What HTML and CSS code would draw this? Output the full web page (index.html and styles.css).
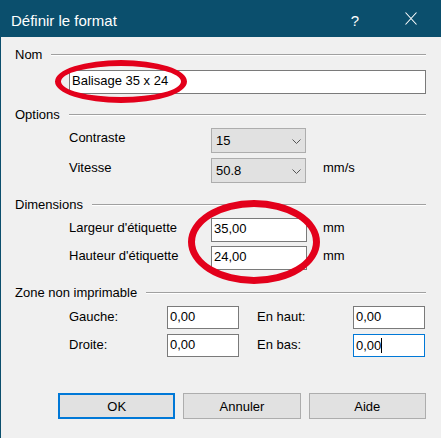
FILE: index.html
```html
<!DOCTYPE html>
<html lang="fr">
<head>
<meta charset="utf-8">
<title>Définir le format</title>
<link rel="stylesheet" href="styles.css">
</head>
<body>
<div class="window">
  <div class="titlebar">
    <span class="title">Définir le format</span>
    <span class="help">?</span>
    <svg class="close" width="12" height="13" viewBox="0 0 12 13"><path d="M0.5 0.5 L11.5 12.5 M11.5 0.5 L0.5 12.5" stroke="#fff" stroke-width="1.1" fill="none"/></svg>
  </div>
  <div class="content">
    <section class="group g-nom">
      <div class="legend"><span>Nom</span><i class="rule"></i></div>
      <div class="body">
        <div class="field name">Balisage 35 x 24</div>
      </div>
    </section>
    <section class="group g-options">
      <div class="legend"><span>Options</span><i class="rule"></i></div>
      <div class="body grid3">
        <span class="label">Contraste</span>
        <div class="combo"><span>15</span><svg width="9" height="5" viewBox="0 0 9 5"><polyline points="0.5,0.5 4.5,4.5 8.5,0.5" fill="none" stroke="#555" stroke-width="1"/></svg></div>
        <span></span>
        <span class="label">Vitesse</span>
        <div class="combo"><span>50.8</span><svg width="9" height="5" viewBox="0 0 9 5"><polyline points="0.5,0.5 4.5,4.5 8.5,0.5" fill="none" stroke="#555" stroke-width="1"/></svg></div>
        <span class="unit">mm/s</span>
      </div>
    </section>
    <section class="group g-dims">
      <div class="legend"><span>Dimensions</span><i class="rule"></i></div>
      <div class="body grid3 dims">
        <span class="label">Largeur d'étiquette</span>
        <div class="field">35,00</div>
        <span class="unit">mm</span>
        <span class="label">Hauteur d'étiquette</span>
        <div class="field">24,00</div>
        <span class="unit">mm</span>
      </div>
    </section>
    <section class="group g-zone">
      <div class="legend"><span>Zone non imprimable</span><i class="rule"></i></div>
      <div class="body grid4">
        <span class="label">Gauche:</span>
        <div class="field small">0,00</div>
        <span class="label right">En haut:</span>
        <div class="field small">0,00</div>
        <span class="label">Droite:</span>
        <div class="field small">0,00</div>
        <span class="label right">En bas:</span>
        <div class="field small focus">0,00<i class="caret"></i></div>
      </div>
    </section>
    <div class="buttons">
      <button class="btn default">OK</button>
      <button class="btn">Annuler</button>
      <button class="btn">Aide</button>
    </div>
  </div>
  <div class="mark mark-nom"></div>
  <div class="mark mark-dims"></div>
</div>
</body>
</html>
```
FILE: styles.css
```css
html, body {
  margin: 0;
  padding: 0;
  background: #f0f0f0;
}
body {
  font-family: "Liberation Sans", Arial, sans-serif;
  font-size: 13px;
  color: #000;
}
.window {
  position: relative;
  width: 441px;
  height: 438px;
  box-sizing: border-box;
  background: #f0f0f0;
  border-left: 1px solid #0b4f6d;
  overflow: hidden;
}
.titlebar {
  height: 37px;
  background: #0b4f6d;
  color: #fff;
  display: flex;
  align-items: flex-start;
  padding-left: 10px;
  font-size: 15px;
  line-height: 17px;
}
.title {
  margin-top: 12px;
}
.help {
  margin-left: auto;
  margin-top: 12px;
}
.close {
  display: block;
  margin-top: 12px;
  margin-left: 46px;
  margin-right: 24px;
}
.content {
  padding: 0 15px 0 14px;
}
.legend {
  display: flex;
  align-items: center;
  height: 15px;
  line-height: 15px;
}
.rule {
  flex: 1;
  height: 0;
  border-top: 1px solid #a0a0a0;
  border-bottom: 1px solid #ffffff;
  margin-left: 9px;
  margin-top: 1px;
}
.g-nom { margin-top: 10px; }
.g-options { margin-top: 13px; }
.g-dims { margin-top: 14px; }
.g-zone { margin-top: 15px; }
.body {
  margin-top: 6px;
  padding-left: 54px;
}
.g-nom .body { margin-top: 8px; }
.field {
  box-sizing: border-box;
  height: 24px;
  border: 1px solid #7a7a7a;
  background: #fff;
  padding-left: 2px;
  line-height: 20px;
  white-space: nowrap;
}
.field.name {
  width: 357px;
}
.grid3 {
  display: grid;
  grid-template-columns: 142px 95px auto;
  row-gap: 5px;
}
.grid3.dims {
  grid-template-columns: 142px 96px auto;
  row-gap: 4px;
}
.label {
  line-height: 15px;
  padding-top: 2px;
  white-space: nowrap;
}
.unit {
  line-height: 15px;
  padding-top: 2px;
  margin-left: 17px;
}
.dims .unit { margin-left: 16px; }
.combo {
  box-sizing: border-box;
  height: 25px;
  border: 1px solid #adadad;
  background: #e1e1e1;
  display: flex;
  align-items: center;
  justify-content: space-between;
  padding: 0 4px 0 4px;
  line-height: 15px;
}
.combo svg { display: block; margin-top: 1px; }
.grid4 {
  display: grid;
  grid-template-columns: 98px 72px 114px 72px;
  column-gap: 0;
  row-gap: 5px;
}
.grid4 .label { padding-top: 3px; }
.grid4 .label.right { margin-left: 18px; }
.field.small {
  height: 23px;
  line-height: 19px;
}
.field.focus {
  border-color: #0078d7;
  display: flex;
  align-items: center;
}
.caret {
  display: inline-block;
  width: 1px;
  height: 15px;
  background: #000;
}
.buttons {
  display: flex;
  gap: 8px;
  margin-top: 36px;
  margin-left: 43px;
}
.btn {
  box-sizing: border-box;
  width: 118px;
  height: 26px;
  background: #e1e1e1;
  border: 1px solid #adadad;
  font-family: "Liberation Sans", Arial, sans-serif;
  font-size: 13px;
  color: #000;
  padding: 0;
  margin: 0;
}
.btn.default {
  border: 2px solid #0078d7;
}
.mark {
  position: absolute;
  box-sizing: border-box;
  border-style: solid;
  border-color: #e3001b;
  border-radius: 50%;
}
.mark-nom {
  left: 54px;
  top: 60px;
  width: 132px;
  height: 43px;
  border-width: 6px;
}
.mark-dims {
  left: 187px;
  top: 200px;
  width: 132px;
  height: 84px;
  border-width: 7px;
}
```
